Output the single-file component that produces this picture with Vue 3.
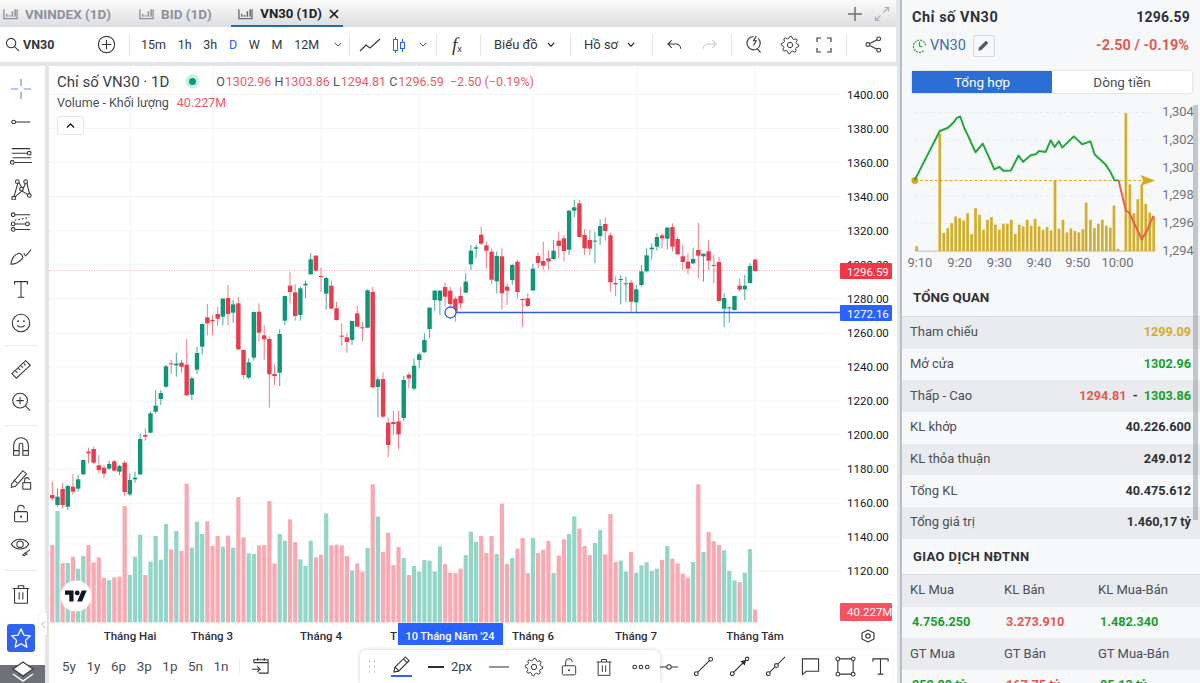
<template>
    <div class="app">
        <div class="main">
            <div class="tabs">
                <div
                    v-for="tab in tabs"
                    :key="tab.name"
                    :class="['tab', { active: tab.active }]"
                >
                    <svg class="tab-icon" viewBox="0 0 16 12" width="15" height="12">
                        <path d="M1 1v10h14V1" fill="none" stroke="currentColor" stroke-width="1.4" />
                        <path d="M4 9V6M7 9V7M10 9V3M13 9V1" fill="none" stroke="currentColor" stroke-width="1.6" />
                    </svg>
                    <span>{{ tab.name }}</span>
                    <svg v-if="tab.active" class="tab-x" viewBox="0 0 10 10" width="10" height="10">
                        <path d="M1 1l8 8M9 1l-8 8" stroke="#1a1a1a" stroke-width="1.7" />
                    </svg>
                </div>
                <div class="tab-end">
                    <svg viewBox="0 0 14 14" width="14" height="14">
                        <path d="M7 0v14M0 7h14" stroke="#6b7078" stroke-width="1.5" />
                    </svg>
                    <svg viewBox="0 0 16 16" width="16" height="16">
                        <path d="M9.5 6.5L14 2M10.5 1.5H14.5V5.5M6.5 9.5L2 14M1.5 10.5V14.5H5.5" fill="none" stroke="#a8adb5" stroke-width="1.2" />
                    </svg>
                </div>
            </div>

            <div class="toolbar">
                <div class="tb-group search">
                    <svg viewBox="0 0 16 16" width="15" height="15">
                        <circle cx="6.5" cy="6.5" r="5" class="ln" />
                        <path d="M10.2 10.2L15 15" class="ln" />
                    </svg>
                    <b>VN30</b>
                    <svg class="plus" viewBox="0 0 20 20" width="19" height="19">
                        <circle cx="10" cy="10" r="8.6" class="ln" />
                        <path d="M10 5v10M5 10h10" class="ln" />
                    </svg>
                </div>
                <div class="tb-group frames">
                    <span
                        v-for="f in frames"
                        :key="f"
                        :class="{ on: f === 'D' }"
                    >{{ f }}</span>
                    <svg class="chev" viewBox="0 0 10 6" width="8" height="5"><path d="M1 1l4 4 4-4" class="ln" /></svg>
                </div>
                <div class="tb-group types">
                    <svg viewBox="0 0 22 14" width="22" height="14">
                        <path d="M1 13l6-6 4 3 10-9" class="ln" />
                    </svg>
                    <svg viewBox="0 0 14 18" width="14" height="18">
                        <path d="M3.5 1v16M10.5 3v13" stroke="#2962ff" stroke-width="1" />
                        <rect x="1.5" y="3.5" width="4" height="11" fill="#fff" stroke="#2962ff" />
                        <rect x="8.5" y="6.5" width="4" height="6" fill="#fff" stroke="#2962ff" />
                    </svg>
                    <svg class="chev" viewBox="0 0 10 6" width="8" height="5"><path d="M1 1l4 4 4-4" class="ln" /></svg>
                </div>
                <div class="tb-group fx"><i>f</i><sub>x</sub></div>
                <div class="tb-group menu menu-a">
                    <span>Biểu đồ</span>
                    <svg viewBox="0 0 10 6" width="8" height="5"><path d="M1 1l4 4 4-4" class="ln dark" /></svg>
                </div>
                <div class="tb-group menu menu-b">
                    <span>Hồ sơ</span>
                    <svg viewBox="0 0 10 6" width="8" height="5"><path d="M1 1l4 4 4-4" class="ln dark" /></svg>
                </div>
                <div class="tb-group history">
                    <svg viewBox="0 0 16 12" width="15" height="12">
                        <path d="M5 1L1 5l4 4M1 5h9a5 5 0 0 1 4.6 5" class="ln" />
                    </svg>
                    <svg viewBox="0 0 16 12" width="15" height="12">
                        <path d="M11 1l4 4-4 4M15 5H6a5 5 0 0 0-4.6 5" class="ln faint" />
                    </svg>
                </div>
                <div class="tb-group actions">
                    <svg viewBox="0 0 20 20" width="19" height="19">
                        <path d="M10 1.6a7 7 0 1 0 5 2" class="ln" />
                        <path d="M13 1l-3 5h3l-3 5" class="ln" />
                        <path d="M13.5 14l4 4.5" class="ln" />
                    </svg>
                    <svg viewBox="0 0 24 24" width="20" height="20">
                        <path :d="gear" class="ln" />
                        <circle cx="12" cy="12" r="3.2" class="ln" />
                    </svg>
                    <svg viewBox="0 0 16 16" width="16" height="16">
                        <path d="M1 5V1h4M11 1h4v4M15 11v4h-4M5 15H1v-4" class="ln" />
                    </svg>
                </div>
                <div class="tb-group share">
                    <svg viewBox="0 0 18 18" width="17" height="17">
                        <circle cx="14.5" cy="3" r="2" class="ln" />
                        <circle cx="14.5" cy="15" r="2" class="ln" />
                        <circle cx="3" cy="9" r="2" class="ln" />
                        <path d="M5 8l7.800-4M5 10l7.800 4" class="ln" />
                    </svg>
                </div>
            </div>

            <div class="body">
                <aside class="side-tools">
                    <div class="tool">
                        <svg viewBox="0 0 24 24" width="24" height="24">
                            <path d="M12 1v8M12 15v8M1 12h8M15 12h8" stroke="#2962ff" stroke-width="1.3" opacity=".7" />
                        </svg>
                    </div>
                    <div class="tool">
                        <svg viewBox="0 0 24 24" width="24" height="24">
                            <circle cx="4" cy="12" r="2" class="ln" /><path d="M6 12h16" class="ln" />
                        </svg>
                    </div>
                    <div class="tool">
                        <svg viewBox="0 0 24 24" width="24" height="24">
                            <path d="M2 4h20M2 9h18M5 19h19M3 14h20" class="ln" />
                            <circle cx="21" cy="9" r="2" class="ln white" />
                            <circle cx="2.500" cy="19" r="2" class="ln white" />
                        </svg>
                    </div>
                    <div class="tool">
                        <svg viewBox="0 0 24 24" width="24" height="24">
                            <path d="M4 22l5-18 5 8 4-8 4 16-9-6-9 8" class="ln" />
                            <circle cx="4" cy="22" r="2" class="ln white" />
                            <circle cx="8" cy="4" r="2" class="ln white" />
                            <circle cx="17" cy="4" r="2" class="ln white" />
                            <circle cx="21" cy="19" r="2" class="ln white" />
                            <circle cx="12.500" cy="12" r="2" class="ln white" />
                        </svg>
                    </div>
                    <div class="tool">
                        <svg viewBox="0 0 24 24" width="24" height="24">
                            <path d="M4 3h18M4 13h18M4 19h18" class="ln" />
                            <path d="M5 9l16-3" class="ln" stroke-dasharray="2 2" />
                            <circle cx="3.500" cy="3" r="2" class="ln white" />
                            <circle cx="3.500" cy="13" r="2" class="ln white" />
                            <circle cx="3.500" cy="19" r="2" class="ln white" />
                            <circle cx="19" cy="13" r="2" class="ln white" />
                        </svg>
                    </div>
                    <div class="tool">
                        <svg viewBox="0 0 24 24" width="24" height="24">
                            <path d="M1 21c1-7 4-11 9-12 3 1 4 3 4 5-4 5-8 7-13 7z" class="ln" />
                            <path d="M15 9l2 3 6-7" class="ln" />
                        </svg>
                    </div>
                    <div class="tool">
                        <svg viewBox="0 0 24 24" width="24" height="24">
                            <path d="M5 7V4h14v3M12 4v17M8.500 21h7" class="ln" />
                        </svg>
                    </div>
                    <div class="tool">
                        <svg viewBox="0 0 24 24" width="24" height="24">
                            <circle cx="12" cy="12" r="9.500" class="ln" />
                            <circle cx="8.800" cy="10" r="1" fill="#33363b" />
                            <circle cx="15.200" cy="10" r="1" fill="#33363b" />
                            <path d="M8 14.500c2 2.500 6 2.500 8 0" class="ln" />
                        </svg>
                    </div>
                    <div class="sep sep-a"></div>
                    <div class="tool">
                        <svg viewBox="0 0 24 24" width="24" height="24">
                            <path d="M2 17L17 3l5 5L7 22z" class="ln" />
                            <path d="M6 14l2 2M9 11l2 2M12 8.500l2 2M15 6l2 2" class="ln" />
                        </svg>
                    </div>
                    <div class="tool">
                        <svg viewBox="0 0 24 24" width="24" height="24">
                            <circle cx="11" cy="10.500" r="8" class="ln" />
                            <path d="M11 6.500v8M7 10.500h8M17 16.500l5 5" class="ln" />
                        </svg>
                    </div>
                    <div class="sep sep-b"></div>
                    <div class="tool">
                        <svg viewBox="0 0 24 24" width="24" height="24">
                            <path d="M4 22V11a8 8 0 0 1 16 0v11h-6V11a2 2 0 0 0-4 0v11zM4 17h6M14 17h6" class="ln" />
                        </svg>
                    </div>
                    <div class="tool">
                        <svg viewBox="0 0 24 24" width="24" height="24">
                            <path d="M2 17L14 3l4 3.500L6 20l-4.500 1z" class="ln" />
                            <path d="M4 13l4 3.500" class="ln" />
                            <rect x="14" y="16" width="8.500" height="7" class="ln" />
                            <path d="M16 16v-3a2.500 2.500 0 0 1 5 0" class="ln" />
                        </svg>
                    </div>
                    <div class="tool">
                        <svg viewBox="0 0 24 24" width="24" height="24">
                            <rect x="5" y="10.500" width="14" height="11" rx="1.500" class="ln" />
                            <path d="M8.500 10.500V7a3.500 3.500 0 0 1 7 0" class="ln" />
                            <circle cx="12" cy="16" r="1.200" fill="#33363b" />
                        </svg>
                    </div>
                    <div class="tool">
                        <svg viewBox="0 0 24 24" width="24" height="24">
                            <path d="M1.500 10C6 3 16 3 20.500 10 16 17 6 17 1.500 10z" class="ln" />
                            <circle cx="11" cy="10" r="3.500" class="ln" />
                            <path d="M14 22l3-3 1.500 1.500-3 2zM18 19l4-3" class="ln" />
                        </svg>
                    </div>
                    <div class="sep sep-c"></div>
                    <div class="tool">
                        <svg viewBox="0 0 24 24" width="24" height="24">
                            <path d="M5 6v16h14V6M3 6h18M9 6V3h6v3M10 10v8M14 10v8" class="ln" />
                        </svg>
                    </div>
                    <div class="star">
                        <svg viewBox="0 0 24 24" width="22" height="22">
                            <path d="M12 2l3 6.800 7.200.8-5.300 5 1.500 7.300L12 18.200l-6.400 3.700 1.500-7.300-5.300-5 7.200-.8z" fill="none" stroke="#fff" stroke-width="1.400" stroke-linejoin="round" />
                        </svg>
                    </div>
                    <div class="layers">
                        <svg viewBox="0 0 26 22" width="26" height="22">
                            <path d="M13 1l10 7-10 7L3 8z" fill="#fff" stroke="#3a3d42" stroke-width="1.300" />
                            <path d="M3 13l10 7 10-7" fill="none" stroke="#fff" stroke-width="1.500" />
                        </svg>
                    </div>
                </aside>

                <div class="chart-col">
                    <div class="chart">
                        <svg class="plot" viewBox="49 66 848 557" width="848" height="557">
                            <line
                                v-for="p in priceLabels"
                                :key="'h' + p.text"
                                x1="49"
                                x2="840"
                                :y1="p.y"
                                :y2="p.y"
                                stroke="#f3f4f6"
                            />
                            <line
                                v-for="x in gridX"
                                :key="'v' + x"
                                :x1="x"
                                :x2="x"
                                y1="66"
                                y2="623"
                                stroke="#f3f4f6"
                            />
                            <rect
                                v-for="b in volBars"
                                :key="'b' + b.x"
                                :x="b.x - 2.1"
                                :y="b.y"
                                width="4.200"
                                :height="622.4 - b.y"
                                :fill="b.up ? '#93d6c7' : '#f8a9b1'"
                            />
                            <line x1="49" x2="840" y1="270.500" y2="270.500" stroke="#f2b3b9" stroke-dasharray="1 1.500" />
                            <g v-for="c in candleBars" :key="'c' + c.x">
                                <line
                                    :x1="c.x"
                                    :x2="c.x"
                                    :y1="c.wt"
                                    :y2="c.wb"
                                    :stroke="c.up ? '#3fae9a' : '#ef7d88'"
                                />
                                <rect
                                    :x="c.x - 2.2"
                                    :y="c.bt"
                                    width="4.400"
                                    :height="c.bh"
                                    :fill="c.up ? '#0f9679' : '#ea3b4e'"
                                />
                            </g>
                            <line x1="456" x2="840" y1="312.500" y2="312.500" stroke="#2f5fdc" stroke-width="1.500" />
                            <circle cx="450.500" cy="312.500" r="5.500" fill="#fff" stroke="#2f5fdc" stroke-width="1.300" />
                            <text
                                v-for="p in priceLabels"
                                :key="'t' + p.text"
                                x="847"
                                :y="p.y + 4"
                                class="axis-text"
                            >{{ p.text }}</text>
                            <rect x="840" y="263" width="52" height="16" rx="1" fill="#f23645" />
                            <text x="847" y="275.500" class="tag-text">1296.59</text>
                            <rect x="840" y="305" width="52" height="16" rx="1" fill="#2962ff" />
                            <text x="847" y="317.500" class="tag-text">1272.16</text>
                            <rect x="840" y="603" width="52" height="18" rx="1" fill="#f7525f" />
                            <text x="847" y="616" class="tag-text">40.227M</text>
                            <circle cx="76" cy="596" r="15.500" fill="#fff" />
                            <g transform="translate(65 588) scale(.61)" fill="#131722">
                                <path d="M14 22H7V11H0V4h14v18zM28 22h-8l7.500-18h8L28 22z" />
                                <circle cx="20" cy="8" r="4" />
                            </g>
                        </svg>

                        <div class="legend">
                            <div class="legend-top">
                                <span class="symbol">Chỉ số VN30 · 1D</span>
                                <span class="status"></span>
                                <span class="ohlc">
                                    <em>O</em>1302.96 <em>H</em>1303.86 <em>L</em>1294.81 <em>C</em>1296.59 &nbsp;−2.50 (−0.19%)
                                </span>
                            </div>
                            <div class="legend-vol">
                                <span>Volume - Khối lượng</span>
                                <span class="red">40.227M</span>
                            </div>
                            <div class="collapse">
                                <svg viewBox="0 0 10 6" width="9" height="5.500"><path d="M1 5l4-4 4 4" class="ln dark" /></svg>
                            </div>
                        </div>
                    </div>

                    <svg class="time-axis" viewBox="49 623 848 27" width="848" height="27">
                        <text
                            v-for="t in months"
                            :key="t.text"
                            :x="t.x"
                            y="640"
                            class="time-text"
                            text-anchor="middle"
                        >{{ t.text }}</text>
                        <rect x="398" y="623" width="105" height="22" fill="#2962ff" />
                        <text x="450" y="640" class="time-text hot" text-anchor="middle">10 Tháng Năm '24</text>
                        <path d="M868 630l6 3v6l-6 3-6-3v-6z" fill="none" stroke="#3a3d42" stroke-width="1.200" stroke-linejoin="round" />
                        <circle cx="868" cy="636" r="2.200" fill="none" stroke="#3a3d42" stroke-width="1.200" />
                    </svg>

                    <div class="bottom-bar">
                        <div class="ranges">
                            <span v-for="r in ranges" :key="r">{{ r }}</span>
                        </div>
                        <svg class="cal" viewBox="0 0 20 20" width="19" height="19">
                            <path d="M3 7V4h15v14H8M3 7h15M7 2v3M14 2v3M1 14h8M6.500 11l3 3-3 3" class="ln" />
                        </svg>
                    </div>
                </div>
            </div>

            <div class="handle">
                <svg viewBox="0 0 6 10" width="5" height="9"><path d="M5 1L1 5l4 4" fill="none" stroke="#9aa0a8" /></svg>
            </div>
            <div class="draw-bar">
                <div class="draw-main">
                    <svg class="grip" viewBox="0 0 10 14" width="10" height="14">
                        <path d="M1 1.500h1M6 1.500h1M1 6.500h1M6 6.500h1M1 11.500h1M6 11.500h1" stroke="#b8bcc3" stroke-width="2" />
                    </svg>
                    <div class="pencil">
                        <svg viewBox="0 0 20 20" width="19" height="19">
                            <path d="M2 18l1-5L14 2l4 4L7 17zM12 4l4 4M3.500 13l3.500 3.500" class="ln" />
                        </svg>
                    </div>
                    <svg class="thick" viewBox="0 0 16 4" width="16" height="4"><path d="M0 2h16" stroke="#2b2e33" stroke-width="2" /></svg>
                    <span class="px">2px</span>
                    <svg class="thin" viewBox="0 0 20 2" width="20" height="2"><path d="M0 1h20" stroke="#2b2e33" stroke-width="1" /></svg>
                    <svg class="d-gear" viewBox="0 0 24 24" width="20" height="20">
                        <path :d="gear" class="ln" />
                        <circle cx="12" cy="12" r="3.200" class="ln" />
                    </svg>
                    <svg class="d-lock" viewBox="0 0 24 24" width="20" height="20">
                        <rect x="4" y="10.500" width="16" height="11" rx="1.500" class="ln" />
                        <path d="M8 10.500V6a4 4 0 0 1 8 0" class="ln" />
                        <circle cx="12" cy="16" r="1.200" fill="#33363b" />
                    </svg>
                    <svg class="d-trash" viewBox="0 0 24 24" width="20" height="20">
                        <path d="M5 6v16h14V6M3 6h18M9 6V3h6v3M10 10v8M14 10v8" class="ln" />
                    </svg>
                    <svg class="d-dots" viewBox="0 0 20 6" width="18" height="6">
                        <circle cx="3" cy="3" r="2" class="ln" />
                        <circle cx="10" cy="3" r="2" class="ln" />
                        <circle cx="17" cy="3" r="2" class="ln" />
                    </svg>
                </div>
                <div class="draw-more">
                    <svg viewBox="0 0 20 8" width="18" height="8">
                        <path d="M0 4h7M13 4h7" class="ln" />
                        <circle cx="10" cy="4" r="2.500" class="ln" />
                    </svg>
                    <svg viewBox="0 0 22 22" width="21" height="21">
                        <path d="M4.500 17.500l13-13" class="ln" />
                        <circle cx="3.500" cy="18.500" r="2" class="ln" />
                        <circle cx="18.500" cy="3.500" r="2" class="ln" />
                    </svg>
                    <svg viewBox="0 0 22 22" width="21" height="21">
                        <path d="M4.500 17.500l12-12" class="ln" />
                        <circle cx="3.500" cy="18.500" r="2" class="ln" />
                        <circle cx="19" cy="3" r="1.800" class="ln" />
                        <path d="M18 4l-1.500 6-4.500-4.500z" fill="#26282c" />
                    </svg>
                    <svg viewBox="0 0 22 22" width="21" height="21">
                        <path d="M4.500 17.500l6-6M13.500 8.500L21 1" class="ln" />
                        <circle cx="3.500" cy="18.500" r="2" class="ln" />
                        <circle cx="12" cy="10" r="2" class="ln" />
                    </svg>
                    <svg viewBox="0 0 20 20" width="19" height="19">
                        <path d="M1.500 18.500V2h17v13H5.500z" class="ln" />
                    </svg>
                    <svg viewBox="0 0 22 22" width="21" height="21">
                        <path d="M3 5v12M19 5v12M5 3h12M5 19h12" class="ln" />
                        <circle cx="3" cy="3" r="2" class="ln" />
                        <circle cx="19" cy="3" r="2" class="ln" />
                        <circle cx="3" cy="19" r="2" class="ln" />
                        <circle cx="19" cy="19" r="2" class="ln" />
                    </svg>
                    <svg viewBox="0 0 20 20" width="19" height="19">
                        <path d="M2 5V2h16v3M10 2v16M7 18h6" class="ln" />
                    </svg>
                </div>
            </div>
        </div>

        <aside class="panel">
            <div class="p-head">
                <b class="p-name">Chỉ số VN30</b>
                <b class="p-price">1296.59</b>
            </div>
            <div class="p-sub">
                <svg viewBox="0 0 16 16" width="15" height="15">
                    <path d="M12.500 13.500A6.500 6.500 0 1 1 14.500 8" fill="none" stroke="#22a838" stroke-width="1.300" stroke-dasharray="2.200 1" />
                    <path d="M8 4v4.500l3 1" fill="none" stroke="#22a838" stroke-width="1.300" />
                </svg>
                <span class="p-code">VN30</span>
                <span class="p-edit">
                    <svg viewBox="0 0 16 16" width="13" height="13">
                        <path d="M1.500 14.500l1-4L11 2l3 3-8.500 8.500z" fill="#555a61" />
                    </svg>
                </span>
                <b class="p-change">-2.50 / -0.19%</b>
            </div>
            <div class="seg">
                <span class="seg-on">Tổng hợp</span>
                <span>Dòng tiền</span>
            </div>

            <svg class="mini" viewBox="900 100 300 175" width="298" height="175">
                <line
                    v-for="y in miniGrid"
                    :key="'g' + y"
                    x1="915"
                    x2="1157"
                    :y1="y"
                    :y2="y"
                    stroke="#e9ebee"
                    stroke-dasharray="3 3"
                />
                <line x1="915" x2="1157" y1="251.500" y2="251.500" stroke="#b9bcc2" />
                <rect
                    v-for="b in miniBars"
                    :key="'m' + b.x"
                    :x="b.x - 1.300"
                    :y="b.y"
                    width="2.700"
                    :height="251.500 - b.y"
                    fill="#d3ad2c"
                />
                <line x1="915" x2="1150" y1="180.500" y2="180.500" stroke="#d8a91f" stroke-dasharray="3 2" />
                <circle cx="915" cy="180.500" r="3.500" fill="#d8a91f" />
                <path d="M1142 175l15 5.500-15 5.500 3-5.500z" fill="#d8a91f" />
                <polyline :points="miniGreen" fill="none" stroke="#22a838" stroke-width="2" stroke-linejoin="round" />
                <polyline :points="miniRed" fill="none" stroke="#e8604c" stroke-width="2" stroke-linejoin="round" />
                <text
                    v-for="l in miniY"
                    :key="l.t"
                    x="1164"
                    :y="l.y"
                    class="mini-text"
                >{{ l.t }}</text>
                <text
                    v-for="l in miniX"
                    :key="l.t"
                    :x="l.x"
                    y="268"
                    class="mini-text"
                    text-anchor="middle"
                >{{ l.t }}</text>
            </svg>

            <div class="p-title">TỔNG QUAN</div>
            <div
                v-for="row in overview"
                :key="row.label"
                class="p-row"
            >
                <span class="lbl">{{ row.label }}</span>
                <b v-if="row.low" class="dual">
                    <span class="red">{{ row.low }}</span><span>-</span><span class="green">{{ row.high }}</span>
                </b>
                <b v-else :class="row.cls">{{ row.value }}</b>
            </div>

            <div class="p-title second">GIAO DỊCH NĐTNN</div>
            <div
                v-for="(row, i) in foreign"
                :key="i"
                class="p-cols"
            >
                <template v-if="row.head">
                    <span v-for="c in row.head" :key="c" class="lbl">{{ c }}</span>
                </template>
                <template v-else>
                    <b class="green">{{ row.vals[0] }}</b>
                    <b class="red">{{ row.vals[1] }}</b>
                    <b class="green">{{ row.vals[2] }}</b>
                </template>
            </div>
            <div class="scroll"></div>
        </aside>
    </div>
</template>

<script setup>
    const tabs = [
        { name: 'VNINDEX (1D)' },
        { name: 'BID (1D)' },
        { name: 'VN30 (1D)', active: true },
    ]
    const frames = ['15m', '1h', '3h', 'D', 'W', 'M', '12M']
    const ranges = ['5y', '1y', '6p', '3p', '1p', '5n', '1n']

    // lobed outline for the settings cog
    const gear = (() => {
        const pts = []
        for (let i = 0; i < 32; i++) {
            const a = (i / 32) * Math.PI * 2
            const r = i % 4 === 0 || i % 4 === 1 ? 10.5 : 8
            pts.push(`${(12 + r * Math.cos(a)).toFixed(1)} ${(12 + r * Math.sin(a)).toFixed(1)}`)
        }
        return 'M' + pts.join('L') + 'Z'
    })()

    const priceLabels = Array.from({ length: 15 }, (_, i) => ({
        text: (1400 - i * 20).toFixed(2),
        y: 94.5 + i * 34.05,
    }))
    const gridX = [130, 213, 321, 419, 533, 637, 755]
    const months = [
        { text: 'Tháng Hai', x: 130 },
        { text: 'Tháng 3', x: 212 },
        { text: 'Tháng 4', x: 321 },
        { text: 'T', x: 393.5 },
        { text: 'Tháng 6', x: 533 },
        { text: 'Tháng 7', x: 636 },
        { text: 'Tháng Tám', x: 755 },
    ]

    const barX = (i) => 52.3 + i * 5.168

    // sampled off the chart at 3x: direction + top of the bar
    const volumes = 'r225 g123 r279 g279 r260 g296 g258 r225 r277 r262 r323 g330 r322 r320 r108 g315 g260 g194 r315 g275 g198 g269 g162 r238 g183 r243 r41 g233 g155 g192 r154 r228 r198 g230 r197 g233 r81 r202 g250 g252 r226 r225 r93 r280 g192 g212 r148 r216 g268 g288 g212 r262 r254 g130 r226 r224 r226 r258 g301 r280 r305 g234 r43 g140 r246 r188 r285 r231 g264 r315 g288 g305 g270 g272 g304 g229 r282 r308 r309 r296 g255 g185 g216 r198 r249 r198 g252 r101 r282 g264 r236 r204 r309 g204 r249 r239 r213 g309 r257 r208 g192 g139 r176 r228 r255 g219 g180 r253 r132 r276 g272 g304 r246 g308 g286 g277 g303 g296 r270 g228 r266 r280 r311 r323 g276 r43 g246 r186 r214 r225 g241 g303 g331 r336 g308 g237 r419'
    const volBars = volumes.split(' ').map((v, i) => ({
        x: barX(i),
        up: v[0] === 'g',
        y: 470 + Number(v.slice(1)) / 3,
    }))

    // direction, wick top, body top, body bottom, wick bottom (3x, from y=190)
    const candles = `r 875 915 925 932,g 895 920 945 950,r 878 897 945 955,g 885 888 950 960,r 852 890 905 915,g 855 868 896 905,
g 808 810 853 855,r 773 785 790 820,r 770 777 818 822,r 795 826 840 850,r 825 833 851 865,g 812 822 836 840,r 810 814 842 845,
g 825 828 845 855,r 812 818 906 918,g 850 870 913 918,g 845 863 868 878,g 730 747 853 856,r 715 735 740 752,g 665 670 728 730,
g 600 647 665 670,g 600 609 627 645,g 525 529 590 595,r 510 520 523 552,g 488 521 526 560,r 510 518 530 548,r 448 524 616 618,
g 560 565 614 630,g 470 489 539 552,g 400 402 470 495,r 342 382 400 436,r 375 390 394 435,r 350 372 386 408,g 325 326 380 405,
r 285 324 372 405,g 330 343 368 398,r 320 340 478 480,r 478 480 555 565,g 505 517 563 567,g 365 366 503 512,r 340 365 428 455,
r 405 436 448 510,r 440 447 553 653,r 523 552 558 585,g 418 432 548 588,g 317 318 392 405,r 245 287 306 340,r 283 307 378 392,
g 290 295 375 392,g 272 281 286 325,g 190 208 253 255,r 195 197 242 245,r 233 258 261 305,g 260 264 311 360,r 272 287 356 358,
r 335 355 390 392,r 400 437 440 468,r 430 442 456 488,g 392 393 450 465,r 347 370 410 412,r 395 412 415 455,g 298 301 413 415,
r 290 306 592 594,g 560 568 591 682,r 547 567 680 684,r 683 698 765 802,r 662 696 702 735,r 662 694 733 778,g 558 570 684 692,
r 547 554 565 595,g 505 527 596 602,g 488 493 510 535,g 430 450 487 488,g 352 353 417 445,g 300 302 330 362,g 300 302 332 375,
r 278 291 320 350,r 290 302 342 355,r 320 326 365 395,r 290 318 340 355,g 250 275 308 310,g 165 182 223 240,g 165 172 176 205,
r 110 134 161 165,r 155 166 182 235,r 175 185 269 282,g 185 198 274 310,r 175 199 310 358,r 280 290 302 345,g 222 225 270 285,
r 210 215 306 325,r 325 327 330 410,r 310 325 348 352,g 222 236 301 303,r 188 198 219 235,r 155 213 227 240,r 180 205 214 240,
g 150 182 207 210,r 125 152 168 205,r 135 145 183 215,g 60 62 179 195,g 30 52 62 82,r 30 40 141 143,r 118 135 175 195,
r 120 150 176 195,g 125 152 155 220,g 88 108 138 165,r 82 102 123 152,r 128 136 277 305,r 260 279 283 318,g 255 267 270 343,
g 260 280 282 335,r 270 278 335 365,g 285 298 337 368,g 225 244 285 290,g 175 196 244 248,g 160 173 178 208,g 130 141 170 182,
r 130 136 145 175,g 112 113 146 178,r 100 111 170 185,r 140 147 193 195,r 165 199 216 240,r 190 215 236 252,g 175 207 220 222,
r 98 180 197 265,g 190 191 199 275,r 150 184 212 240,r 195 225 228 280,r 200 216 333 335,g 310 324 356 412,g 350 352 355 398,
g 318 318 360 362,r 265 287 299 305,g 255 287 298 330,g 220 228 279 281,r 205 209 243 245`
    const candleBars = candles.split(',').map((line, i) => {
        const [dir, wt, bt, bb, wb] = line.trim().split(' ')
        const y = (v) => 190 + Number(v) / 3
        return {
            x: barX(i),
            up: dir === 'g',
            wt: y(wt),
            bt: y(bt),
            bh: Math.max(y(bb) - y(bt), 1),
            wb: y(wb),
        }
    })

    const toMini = (list) => list.map(([x, y]) => `${900 + x / 3},${y / 3}`).join(' ')
    const miniGreen = toMini([[44, 541], [120, 392], [130, 388], [145, 382], [160, 368], [172, 352], [182, 348], [195, 385], [205, 405], [228, 456], [250, 430], [285, 508], [300, 500], [312, 512], [335, 511], [358, 466], [372, 485], [395, 465], [410, 462], [420, 452], [440, 455], [455, 420], [467, 440], [480, 423], [490, 442], [525, 408], [550, 432], [575, 423], [588, 463], [620, 492], [635, 515], [648, 541], [660, 541]])
    const miniRed = toMini([[660, 541], [682, 632], [692, 638], [730, 718], [745, 695], [765, 648]])
    const miniTops = [[50, 740], [120, 400], [132, 700], [144, 685], [156, 670], [168, 650], [180, 655], [192, 662], [204, 640], [216, 703], [228, 625], [240, 645], [252, 690], [264, 660], [276, 652], [288, 675], [300, 690], [312, 672], [324, 672], [336, 660], [348, 703], [360, 675], [372, 680], [384, 660], [396, 678], [408, 657], [420, 680], [432, 690], [444, 682], [456, 692], [468, 540], [480, 687], [492, 660], [504, 698], [516, 686], [528, 694], [540, 698], [552, 688], [562, 608], [575, 660], [587, 685], [599, 672], [611, 660], [623, 678], [635, 684], [646, 617], [658, 748], [682, 338], [694, 553], [706, 640], [718, 598], [730, 556], [742, 612], [754, 638], [766, 650]]
    const miniBars = miniTops.map(([x, y]) => ({ x: 900 + x / 3, y: y / 3 }))
    const miniGrid = [112, 140, 168, 196, 224]
    const miniY = [
        { t: '1,304', y: 116 },
        { t: '1,302', y: 144 },
        { t: '1,300', y: 172 },
        { t: '1,298', y: 199.5 },
        { t: '1,296', y: 227.5 },
        { t: '1,294', y: 255 },
    ]
    const miniX = [
        { t: '9:10', x: 920 },
        { t: '9:20', x: 960 },
        { t: '9:30', x: 1000 },
        { t: '9:40', x: 1040 },
        { t: '9:50', x: 1079 },
        { t: '10:00', x: 1119 },
    ]

    const overview = [
        { label: 'Tham chiếu', value: '1299.09', cls: 'gold' },
        { label: 'Mở cửa', value: '1302.96', cls: 'green' },
        { label: 'Thấp - Cao', low: '1294.81', high: '1303.86' },
        { label: 'KL khớp', value: '40.226.600' },
        { label: 'KL thỏa thuận', value: '249.012' },
        { label: 'Tổng KL', value: '40.475.612' },
        { label: 'Tổng giá trị', value: '1.460,17 tỷ' },
    ]
    const foreign = [
        { head: ['KL Mua', 'KL Bán', 'KL Mua-Bán'] },
        { vals: ['4.756.250', '3.273.910', '1.482.340'] },
        { head: ['GT Mua', 'GT Bán', 'GT Mua-Bán'] },
        { vals: ['252.88 tỷ', '167.75 tỷ', '85.13 tỷ'] },
    ]
</script>

<style>
    html, body {
        margin: 0;
        overflow: hidden;
        background: #fff;
    }
</style>

<style scoped>
    .app {
        display: flex;
        width: 1200px;
        height: 683px;
        overflow: hidden;
        font-family: Roboto, "Liberation Sans", sans-serif;
        color: #2a2e39;
    }

    .ln {
        fill: none;
        stroke: #33363b;
        stroke-width: 1.15;
    }
    .ln.dark {
        stroke: #131722;
        stroke-width: 1.4;
    }
    .ln.faint {
        stroke: #c4c8cf;
    }
    .ln.white {
        fill: #fff;
    }

    .main {
        position: relative;
        width: 900px;
        height: 683px;
        flex: none;
        display: flex;
        flex-direction: column;
        background: #e3e5ea;
    }

    /* tabs */
    .tabs {
        height: 27px;
        flex: none;
        display: flex;
        align-items: center;
        padding-right: 6px;
        margin-right: 4px;
        background: linear-gradient(#fbfbfb, #dcdddf);
    }
    .tab {
        display: flex;
        align-items: center;
        gap: 7px;
        height: 27px;
        padding: 0 3px;
        margin-right: 22px;
        font-size: 13.500px;
        font-weight: 700;
        color: #8c919b;
    }
    .tab-icon {
        color: #8c919b;
    }
    .tab.active {
        color: #1f2125;
        margin-left: -5.500px;
        padding: 2px 4px 0 7px;
        font-size: 13.200px;
        box-sizing: border-box;
        border-bottom: 2px solid #2a6c9c;
    }
    .tab.active .tab-icon {
        color: #666b73;
    }
    .tab-end {
        margin-left: auto;
        display: flex;
        align-items: center;
        gap: 12px;
    }

    /* top toolbar */
    .toolbar {
        height: 35px;
        flex: none;
        display: flex;
        align-items: center;
        margin-right: 4px;
        background: #fff;
        font-size: 12.5px;
        color: #33363b;
    }
    .tb-group {
        display: flex;
        align-items: center;
        height: 22px;
        box-sizing: border-box;
        border-right: 1px solid #e6e8ec;
    }
    .search {
        width: 130px;
        padding-left: 5px;
        gap: 3px;
    }
    .search b {
        font-size: 12.5px;
    }
    .plus {
        margin-left: 40px;
    }
    .frames {
        width: 220px;
        padding-left: 11px;
        gap: 11.700px;
    }
    .frames .on {
        color: #2962ff;
    }
    .chev {
        margin-left: 3px;
    }
    .types {
        width: 87px;
        padding-left: 8.500px;
        gap: 11px;
    }
    .types .chev {
        margin-left: 2px;
    }
    .fx {
        width: 44px;
        padding-left: 15px;
        font-family: "Liberation Serif", serif;
        font-size: 19px;
    }
    .fx sub {
        font-size: 9px;
        margin-top: 8px;
        font-family: "Liberation Sans", sans-serif;
    }
    .menu {
        padding-left: 13px;
        gap: 9px;
        font-size: 13px;
    }
    .menu-a {
        width: 90px;
    }
    .menu-b {
        width: 82px;
    }
    .history {
        width: 79px;
        padding-left: 14px;
        gap: 20px;
    }
    .actions {
        width: 115px;
        padding-left: 12px;
        gap: 16.500px;
    }
    .share {
        border-right: none;
        padding-left: 18px;
    }

    /* main body */
    .body {
        flex: 1;
        display: flex;
        min-height: 0;
        margin-top: 4px;
    }
    .side-tools {
        position: relative;
        width: 45px;
        flex: none;
        margin-right: 4px;
        padding: 6.300px 3px 0 0;
        box-sizing: border-box;
        background: #fff;
        display: flex;
        flex-direction: column;
        align-items: center;
    }
    .tool {
        height: 33.400px;
        display: flex;
        align-items: center;
        justify-content: center;
        flex: none;
    }
    .tool svg {
        transform: scale(.92);
    }
    .sep {
        width: 34px;
        flex: none;
        border-top: 1px solid #e9ebef;
    }
    .sep-a {
        margin: 6px 0 5.800px;
    }
    .sep-b {
        margin: 5.500px 0 3.800px;
    }
    .sep-c {
        margin: 7px 0 6.400px;
    }
    .star {
        margin-top: 13.300px;
        width: 28px;
        height: 28px;
        flex: none;
        display: flex;
        align-items: center;
        justify-content: center;
        background: #2f63f0;
        border-radius: 3px;
    }
    .layers {
        position: absolute;
        left: 0;
        right: 0;
        bottom: 0;
        height: 18px;
        background: #6e7176;
        display: flex;
        align-items: flex-end;
        justify-content: center;
    }
    .chart-col {
        width: 848px;
        flex: none;
        display: flex;
        flex-direction: column;
        background: #fff;
    }
    .chart {
        position: relative;
        height: 557px;
        flex: none;
    }
    .plot, .time-axis, .mini {
        display: block;
    }
    .axis-text {
        font-size: 11.5px;
        fill: #131722;
    }
    .tag-text {
        font-size: 11.5px;
        fill: #fff;
    }
    .time-text {
        font-size: 11.5px;
        font-weight: 500;
        fill: #2a2e39;
    }
    .time-text.hot {
        font-size: 11px;
        fill: #fff;
    }

    /* legend over the chart */
    .legend {
        position: absolute;
        left: 8px;
        top: 6px;
    }
    .legend-top {
        display: flex;
        align-items: center;
        height: 19px;
    }
    .symbol {
        font-size: 15px;
        color: #3a3e47;
    }
    .status {
        width: 7px;
        height: 7px;
        margin-left: 20px;
        border-radius: 50%;
        background: #089981;
        box-shadow: 0 0 0 3.500px #cdeee7;
    }
    .ohlc {
        margin-left: 20px;
        font-size: 12.500px;
        color: #ea5a68;
        white-space: pre;
    }
    .ohlc em {
        font-style: normal;
        color: #4d525c;
        margin-right: 1px;
    }
    .legend-vol {
        display: flex;
        gap: 8px;
        height: 15px;
        margin-top: 4px;
        font-size: 12.500px;
        color: #4a4e57;
    }
    .red {
        color: #e8574e;
    }
    .legend-vol .red {
        color: #ea5a68;
    }
    .collapse {
        width: 27px;
        height: 19px;
        margin-top: 6px;
        box-sizing: border-box;
        display: flex;
        align-items: center;
        justify-content: center;
        border: 1px solid #e6e8ec;
        border-radius: 2px;
        background: #fff;
    }

    /* bottom bar */
    .bottom-bar {
        flex: 1;
        display: flex;
        align-items: center;
        padding: 0 0 2px 13px;
    }
    .ranges {
        display: flex;
        gap: 10.500px;
        font-size: 13.5px;
        color: #4a4e57;
        padding-right: 10px;
        border-right: 1px solid #eceef1;
    }
    .cal {
        margin-left: 11px;
    }
    .handle {
        position: absolute;
        left: 39px;
        top: 612px;
        width: 8px;
        height: 24px;
        border-radius: 3px;
        background: #fff;
        box-shadow: 0 0 2px rgba(0, 0, 0, .15);
        display: flex;
        align-items: center;
        justify-content: center;
    }
    .draw-bar {
        position: absolute;
        left: 360px;
        right: 8px;
        top: 650px;
        height: 33px;
        display: flex;
    }
    .draw-main {
        position: relative;
        z-index: 1;
        width: 300px;
        flex: none;
        display: flex;
        align-items: center;
        background: #fff;
        border-radius: 6px 6px 0 0;
        box-shadow: 0 0 4px rgba(0, 0, 0, .2);
    }
    .grip {
        margin-left: 8px;
    }
    .pencil {
        align-self: flex-start;
        margin-left: 13px;
        height: 27px;
        width: 21px;
        box-sizing: border-box;
        display: flex;
        align-items: center;
        justify-content: center;
        padding-top: 4px;
        border-bottom: 2px solid #2962ff;
    }
    .thick {
        margin-left: 16px;
    }
    .px {
        margin-left: 7px;
        font-size: 13px;
        color: #3a3e47;
    }
    .thin {
        margin-left: 17px;
    }
    .d-gear {
        margin-left: 15px;
    }
    .d-lock {
        margin-left: 15px;
    }
    .d-trash {
        margin-left: 15px;
    }
    .d-dots {
        margin-left: 18px;
    }
    .draw-more {
        flex: 1;
        display: flex;
        align-items: center;
        justify-content: space-between;
        padding: 0 2px 0 0;
        background: #fff;
        border-radius: 0 6px 0 0;
        box-shadow: 0 0 3px rgba(0, 0, 0, .08);
    }

    /* right panel */
    .panel {
        position: relative;
        width: 300px;
        flex: none;
        height: 683px;
        box-sizing: border-box;
        border-left: 2px solid #b9bdc4;
        background: #f7f8fa;
        font-size: 13px;
        color: #2f3136;
        overflow: hidden;
    }
    .p-head {
        height: 34px;
        display: flex;
        align-items: center;
        justify-content: space-between;
        padding: 0 10px;
        font-size: 14px;
    }
    .p-name {
        font-size: 14.500px;
        letter-spacing: .5px;
    }
    .p-price {
        letter-spacing: .2px;
    }
    .p-sub {
        height: 23px;
        display: flex;
        align-items: center;
        padding: 0 11px 0 10px;
    }
    .p-code {
        margin-left: 3px;
        font-size: 14.5px;
        color: #3d6db5;
    }
    .p-edit {
        width: 22px;
        height: 22px;
        margin-left: 7px;
        box-sizing: border-box;
        display: flex;
        align-items: center;
        justify-content: center;
        border: 1px solid #d6d8dc;
        border-radius: 2px;
    }
    .p-change {
        margin-left: auto;
        font-size: 14.500px;
        color: #e8574e;
    }
    .seg {
        display: flex;
        width: 280px;
        height: 22px;
        margin: 14px 0 0 10px;
        box-shadow: 0 0 2px rgba(0, 0, 0, .25);
        background: #fff;
        border-radius: 2px;
        font-size: 13.5px;
    }
    .seg span {
        flex: 1;
        display: flex;
        align-items: center;
        justify-content: center;
        color: #4a4e57;
    }
    .seg .seg-on {
        background: #2b6fd6;
        color: #fff;
    }
    .mini {
        margin-top: 7px;
        margin-left: -2px;
    }
    .mini-text {
        font-size: 13px;
        fill: #6f7378;
    }
    .p-title {
        height: 42px;
        display: flex;
        align-items: center;
        box-sizing: border-box;
        padding: 2px 0 0 11px;
        border-bottom: 1px solid #d8dadf;
        font-size: 13.500px;
        font-weight: 700;
    }
    .p-title.second {
        height: 36px;
        padding-top: 0;
        font-size: 13px;
        letter-spacing: .4px;
    }
    .p-row, .p-cols {
        height: 31.700px;
        box-sizing: border-box;
        display: flex;
        align-items: center;
        padding: 0 0 2px 8px;
    }
    .p-row {
        justify-content: space-between;
        padding-right: 9px;
    }
    .p-row b, .p-cols b {
        font-size: 12.700px;
    }
    .dual {
        display: flex;
        gap: 6px;
    }
    .p-cols span, .p-cols b {
        width: 94px;
    }
    .p-cols b {
        padding-left: 2px;
        box-sizing: border-box;
    }
    .lbl {
        color: #4a4e55;
    }
    .p-row:nth-child(6), .p-row:nth-child(8), .p-row:nth-child(10), .p-row:nth-child(12) {
        background: #e9ebee;
    }
    .p-cols:nth-child(14), .p-cols:nth-child(16) {
        background: #e9ebee;
    }
    .green {
        color: #16a02a;
    }
    .gold {
        color: #d4ac2b;
    }
    .scroll {
        position: absolute;
        right: 2px;
        top: 105px;
        width: 5px;
        height: 415px;
        background: rgba(120, 124, 130, .4);
    }
</style>
